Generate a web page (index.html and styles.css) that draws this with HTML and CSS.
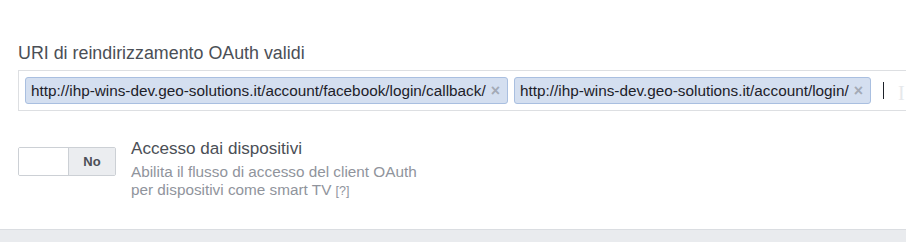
FILE: index.html
```html
<!DOCTYPE html>
<html lang="it">
<head>
<meta charset="utf-8">
<title>OAuth</title>
<link rel="stylesheet" href="styles.css">
</head>
<body>
<div class="page">
  <section class="field">
    <label class="field-label">URI di reindirizzamento OAuth validi</label>
    <div class="token-input">
      <span class="token">http://ihp-wins-dev.geo-solutions.it/account/facebook/login/callback/<span class="remove">×</span></span>
      <span class="token">http://ihp-wins-dev.geo-solutions.it/account/login/<span class="remove">×</span></span>
      <span class="caret"></span>
      <span class="ibeam">I</span>
    </div>
  </section>
  <section class="setting">
    <div class="toggle">
      <span class="toggle-on"></span>
      <span class="toggle-off">No</span>
    </div>
    <div class="setting-text">
      <div class="setting-title">Accesso dai dispositivi</div>
      <div class="setting-desc">Abilita il flusso di accesso del client OAuth<br>per dispositivi come smart TV <span class="help">[?]</span></div>
    </div>
  </section>
  <div class="footer-bar"></div>
</div>
</body>
</html>
```

FILE: styles.css
```css
html, body {
  margin: 0;
  padding: 0;
  background: #fff;
  overflow: hidden;
}
body {
  font-family: "Liberation Sans", Arial, sans-serif;
  width: 909px;
  height: 252px;
}
.page {
  padding-top: 43px;
}
.field {
  padding-left: 18px;
}
.field-label {
  display: block;
  font-size: 17.85px;
  line-height: 21px;
  color: #4b4f56;
}
.token-input {
  margin-top: 6px;
  width: 888px;
  box-sizing: border-box;
  height: 41px;
  border: 1px solid #dddfe2;
  border-right: none;
  padding: 6px 0 0 6px;
  display: flex;
  align-items: flex-start;
  gap: 6px;
}
.token {
  display: inline-flex;
  align-items: center;
  height: 27px;
  box-sizing: border-box;
  padding: 0 7px 0 5px;
  background: #d4dff0;
  border: 1px solid #a9bfe0;
  border-radius: 3px;
  font-size: 15.3px;
  color: #1d2129;
  white-space: nowrap;
}
.remove {
  margin-left: 5px;
  color: #a3aab6;
  font-size: 16px;
  font-weight: bold;
}
.caret {
  margin-left: 6px;
  margin-top: 5px;
  width: 1px;
  height: 17px;
  background: #1d2129;
}
.ibeam {
  margin-left: 8px;
  margin-top: 6px;
  font-family: "Liberation Serif", serif;
  font-size: 20px;
  line-height: 20px;
  color: #e6e8eb;
}
.setting {
  display: flex;
  padding-left: 18px;
  margin-top: 28px;
  gap: 15px;
}
.toggle {
  margin-top: 8px;
  display: flex;
  width: 98px;
  height: 29px;
  box-sizing: border-box;
  border: 1px solid #ccd0d5;
  border-radius: 2px;
  overflow: hidden;
}
.toggle-on {
  width: 49px;
  background: #fff;
  border-right: 1px solid #ccd0d5;
}
.toggle-off {
  flex: 1;
  background: #ebedf0;
  display: flex;
  align-items: center;
  justify-content: center;
  font-size: 13px;
  font-weight: bold;
  color: #4b4f56;
}
.setting-title {
  font-size: 17.1px;
  line-height: 20px;
  color: #4b4f56;
}
.setting-desc {
  margin-top: 4px;
  font-size: 15.3px;
  line-height: 18px;
  color: #90949c;
}
.help {
  font-size: 12.5px;
}
.footer-bar {
  margin-top: 29px;
  width: 906px;
  height: 13px;
  box-sizing: border-box;
  background: #e9ebee;
  border-top: 1px solid #dadde1;
}
```
